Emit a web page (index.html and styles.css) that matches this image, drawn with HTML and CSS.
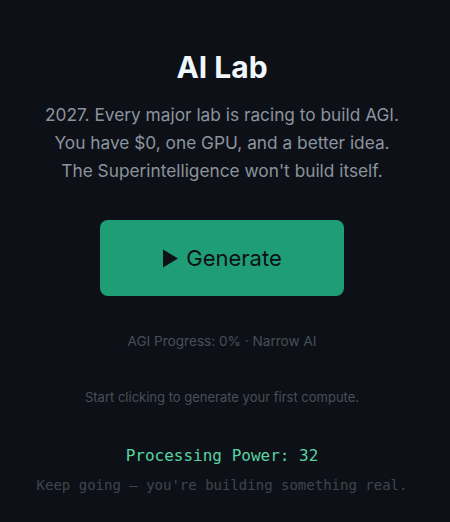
FILE: index.html
```html
<!DOCTYPE html>
<html lang="en">
<head>
<meta charset="utf-8">
<title>AI Lab</title>
<link rel="stylesheet" href="styles.css">
</head>
<body>
<main class="app">
  <h1 class="title">AI Lab</h1>
  <p class="intro">2027. Every major lab is racing to build AGI.<br>You have $0, one GPU, and a better idea.<br>The Superintelligence won't build itself.</p>
  <button class="generate" type="button">
    <svg class="play" width="17" height="19" viewBox="0 0 17 19"><path d="M1 0.5 L16 9.5 L1 18.5 Z" fill="#0d1117"/></svg>
    <span>Generate</span>
  </button>
  <p class="progress">AGI Progress: 0% · Narrow AI</p>
  <p class="hint">Start clicking to generate your first compute.</p>
  <p class="power">Processing Power: 32</p>
  <p class="keep">Keep going — you're building something real.</p>
</main>
</body>
</html>
```
FILE: styles.css
```css
html, body {
  margin: 0;
  padding: 0;
  background: #0d1117;
}
body {
  font-family: Inter, "Noto Sans", sans-serif;
  color: #8b949e;
}
.app {
  display: flex;
  flex-direction: column;
  align-items: center;
  text-align: center;
  padding: 47px 6px 0 0;
}
.title {
  margin: 0;
  font-size: 30px;
  font-weight: 700;
  line-height: 40px;
  color: #f0f6fc;
}
.intro {
  margin: 14px 0 0;
  font-size: 17.3px;
  line-height: 28px;
  color: #8b949e;
}
.generate {
  margin-top: 35px;
  width: 244px;
  height: 76px;
  border: none;
  border-radius: 8px;
  background: #1f9e76;
  color: #0d1117;
  font-family: Inter, "Noto Sans", sans-serif;
  font-size: 22px;
  display: flex;
  align-items: center;
  justify-content: center;
  gap: 7px;
  padding: 0;
}
.play {
  display: block;
}
.progress {
  margin: 35px 0 0;
  font-size: 13.6px;
  line-height: 20px;
  color: #484f58;
}
.hint {
  margin: 36px 0 0;
  font-size: 13px;
  line-height: 20px;
  color: #484f58;
}
.power {
  margin: 39px 0 0;
  font-family: "DejaVu Sans Mono", monospace;
  font-size: 16px;
  line-height: 20px;
  color: #58d3a3;
}
.keep {
  margin: 9px 0 0;
  font-family: "DejaVu Sans Mono", monospace;
  font-size: 14px;
  line-height: 20px;
  color: #3f464f;
}
```
